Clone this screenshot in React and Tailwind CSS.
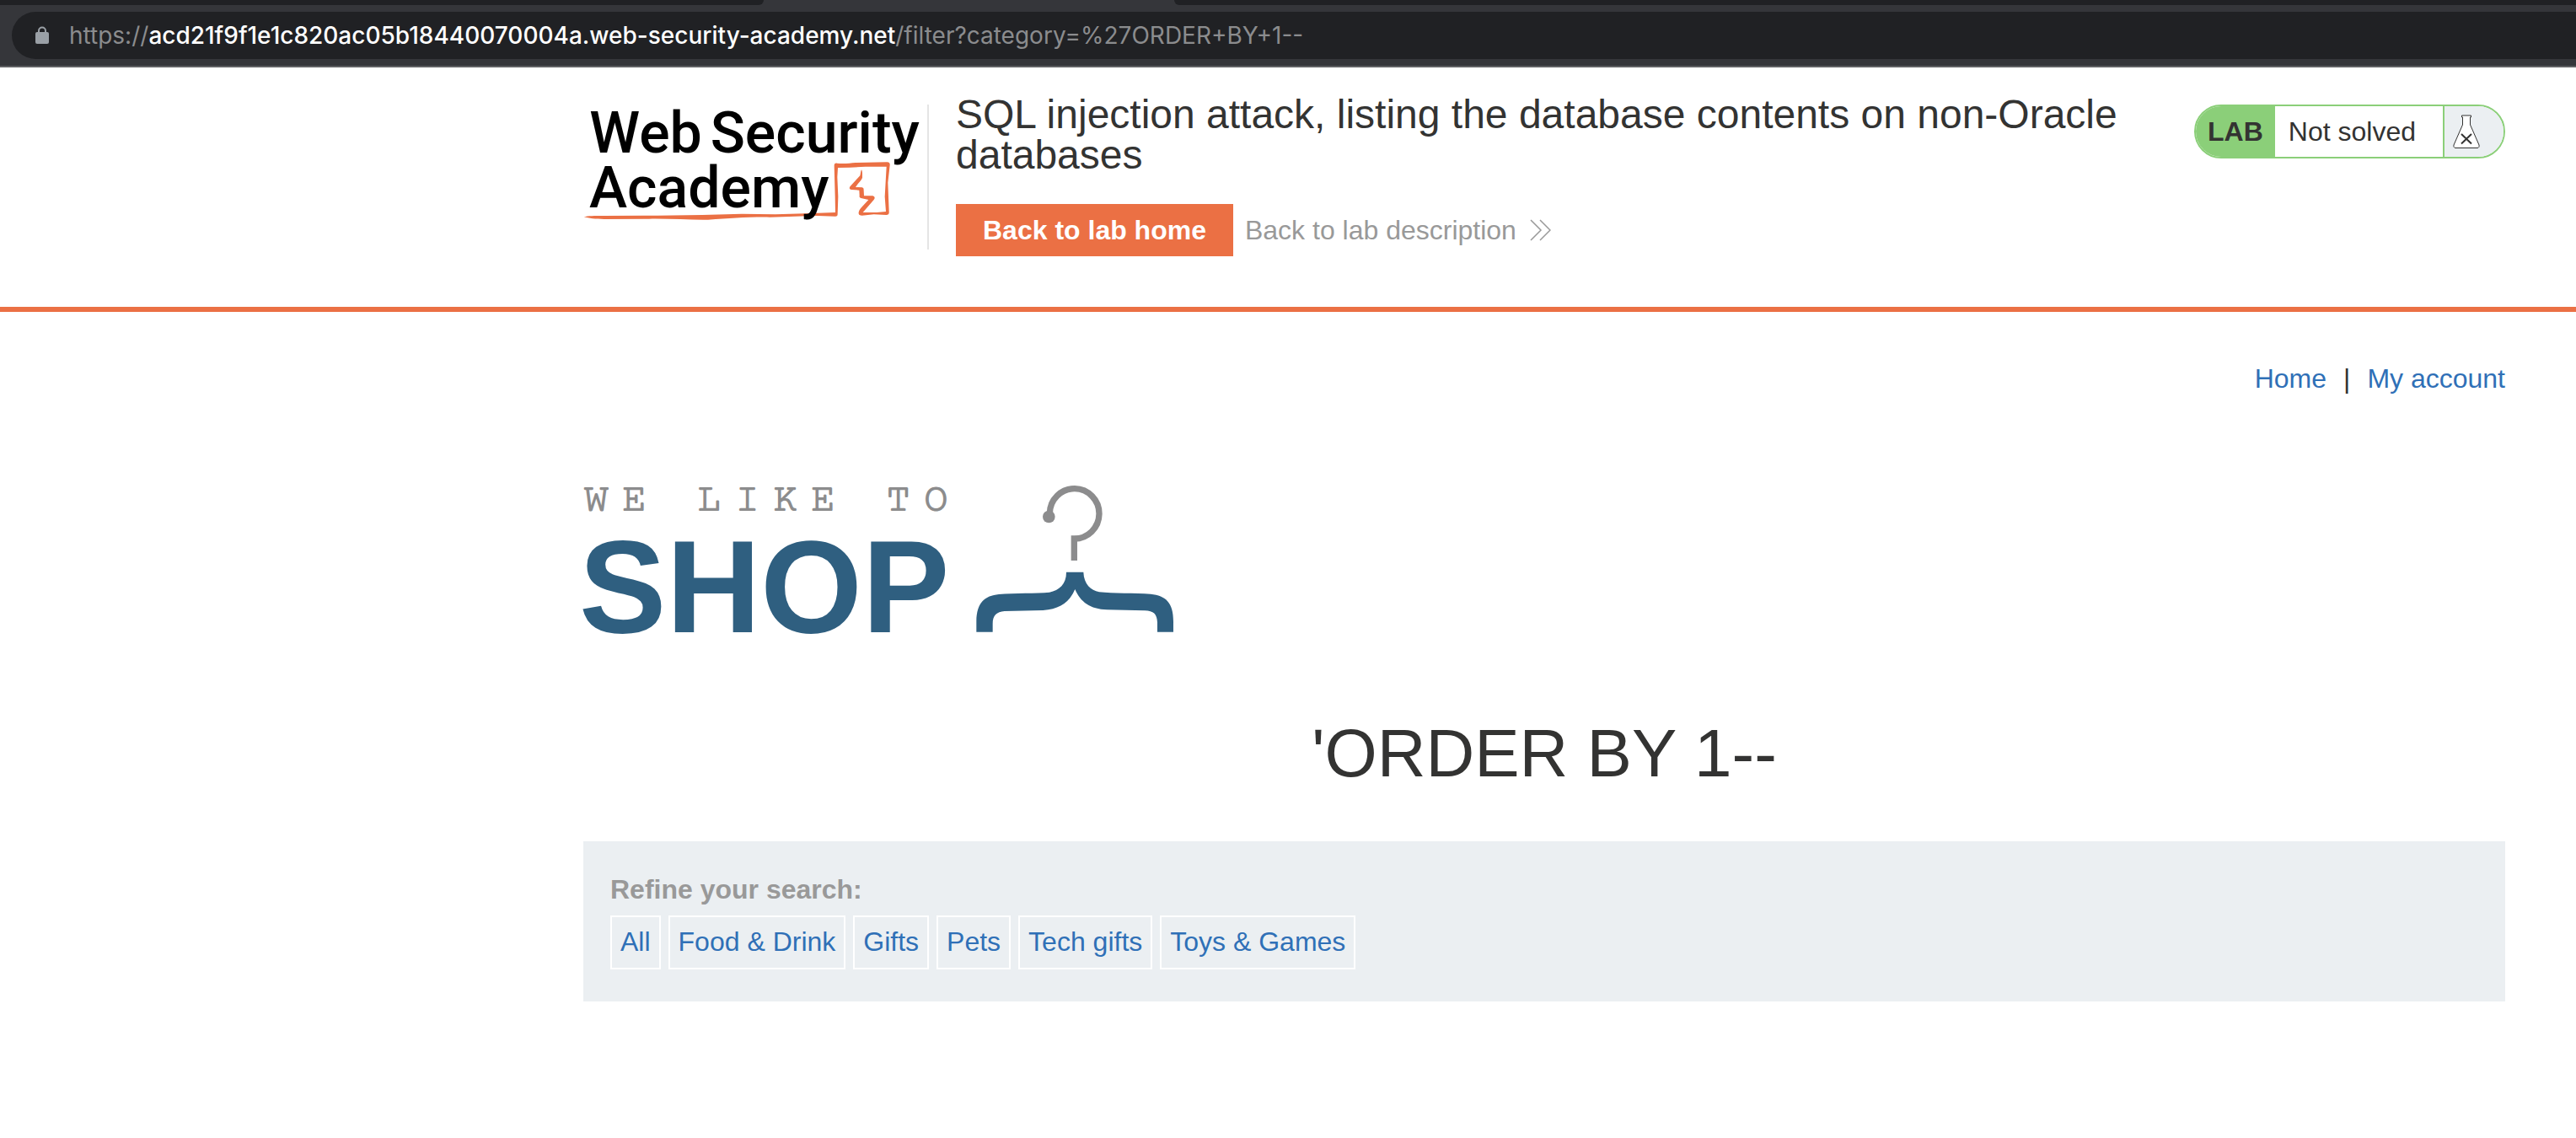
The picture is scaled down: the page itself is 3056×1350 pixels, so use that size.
const categories = ['All', 'Food & Drink', 'Gifts', 'Pets', 'Tech gifts', 'Toys & Games'];

function LockIcon() {
  return (
    <svg viewBox="0 0 16 22" className="h-[22px] w-4 shrink-0" aria-hidden="true">
      <path d="M4 9V5.500A4 4 0 0 1 12 5.500V9" fill="none" stroke="#9aa0a6" strokeWidth="2" />
      <rect x="0" y="7" width="16" height="14" rx="2" fill="#9aa0a6" />
    </svg>
  );
}

function BrowserBar() {
  return (
    <div className="border-b-2 border-[#5f6063] bg-[#35363a] pb-2">
      <div className="flex h-1.5">
        <div className="w-[906px] rounded-br-xl bg-[#202124]" />
        <div className="w-[487px]" />
        <div className="flex-1 rounded-bl-xl bg-[#202124]" />
      </div>
      <div className="mt-2 ml-3.5 flex h-14 items-center gap-6 rounded-l-full bg-[#202124] pl-7">
        <LockIcon />
        <div
          role="textbox"
          aria-label="Address"
          contentEditable
          suppressContentEditableWarning
          className="flex-1 font-[Inter,sans-serif] text-[28px] leading-9 whitespace-nowrap text-[#8b8c8e] outline-none"
        >
          https://
          <span className="font-medium text-white">acd21f9f1e1c820ac05b18440070004a.web-security-academy.net</span>
          /filter?category=%27ORDER+BY+1--
        </div>
      </div>
    </div>
  );
}

function AcademyLogo() {
  return (
    <svg
      viewBox="36 60 1200 450"
      className="mt-10 h-[150px] w-[400px] shrink-0 overflow-visible"
      role="img"
      aria-label="Web Security Academy"
    >
      <path
        fill="#eb7044"
        d="M38 472C52 468 75 468 110 468L300 467L460 465L600 461L720 463L850 459L933 456L932 400L929 290C929 283 932 280 939 281C960 284 985 281 1005 279L1115 277C1124 276 1128 280 1127 288L1120 350L1124 452C1125 461 1122 465 1114 465L1070 463L1028 467C1018 467 1015 463 1016 456C1017 449 1020 445 1024 440L1051 411L1024 405C1019 404 1018 401 1019 395L1018 377L990 375C982 373 982 368 986 363L1021 325C1023 318 1023 309 1026 304C1030 309 1029 325 1029 333C1024 345 1012 354 1005 366L1028 367C1033 368 1034 371 1034 377L1035 397L1066 397C1074 400 1075 405 1070 411L1031 456L1080 456L1113 453L1109 400L1115 293L1040 293L985 296L942 297L940 330L943 400L941 462C941 468 939 470 933 470L870 468C820 468 760 472 700 473C620 472 560 477 480 482C420 483 350 478 270 479L110 480C80 480 55 477 38 472Z"
      />
      <g className="font-[Roboto,sans-serif] font-medium" fontSize="204" fill="#000">
        <text x="58" y="243">Web</text>
        <text x="488" y="243">Security</text>
        <text x="57" y="437">Academy</text>
      </g>
    </svg>
  );
}

function FlaskIcon() {
  return (
    <svg viewBox="0 0 32 40" className="h-10 w-8" aria-hidden="true">
      <path
        d="M10.500 1H21.500V3H20.500V12L31 36C31.500 38 30.500 39.500 29 39.500H3C1.500 39.500 0.500 38 1 36L11.500 12V3H10.500Z"
        fill="#fff"
        stroke="#333332"
        strokeWidth="1"
      />
      <path d="M10 23L22 34.500M22 23L10 34.500" fill="none" stroke="#333332" strokeWidth="2" />
    </svg>
  );
}

function LabStatus() {
  return (
    <div className="mt-11 ml-auto flex h-16 shrink-0 overflow-hidden rounded-full border-2 border-[#8bcf79] bg-white text-[32px]">
      <p className="flex items-center bg-[#8bcf79] px-3.5 font-bold">LAB</p>
      <p className="flex items-center pr-8 pl-4">Not solved</p>
      <span className="flex items-center border-l-2 border-[#8bcf79] bg-[#ebeff2] pr-7 pl-2.5">
        <FlaskIcon />
      </span>
    </div>
  );
}

function LabHeader() {
  return (
    <header className="border-b-[6px] border-[#eb7044] pb-[60px]">
      <div className="mr-[84px] ml-auto flex max-w-[2280px] items-start">
        <AcademyLogo />
        <div className="mt-11 ml-2 h-[172px] w-0.5 shrink-0 bg-[#e5e5e5]" />
        <div className="mt-8 ml-8">
          <h2 className="text-[48px] leading-[48px]">
            SQL injection attack, listing the database contents on non-Oracle databases
          </h2>
          <div className="mt-[34px] flex items-center gap-3.5">
            <a href="#home" className="bg-[#eb7044] px-8 text-[32px] leading-[62px] font-bold text-white">
              Back to lab home
            </a>
            <a href="#description" className="flex items-center gap-4 text-[32px] leading-[62px] text-[#999999]">
              Back to lab description
              <svg viewBox="0 0 25 26" className="h-[26px] w-[25px]" aria-hidden="true">
                <path d="M1 1L13 13L1 25M12 1L24 13L12 25" fill="none" stroke="#999999" strokeWidth="1.500" />
              </svg>
            </a>
          </div>
        </div>
        <LabStatus />
      </div>
    </header>
  );
}

function ShopLogo() {
  return (
    <svg
      viewBox="0 0 720 200"
      className="mt-[87px] h-[200px] w-[720px] overflow-visible"
      role="img"
      aria-label="We like to shop"
    >
      <text
        x="1"
        y="46"
        fontSize="48"
        fill="#8c8c8d"
        className="font-['Courier_Prime','Courier_10_Pitch',Courier,'Liberation_Mono',monospace] tracking-[16px]"
      >
        WE LIKE TO
      </text>
      <text x="-5" y="190" fontSize="155" fill="#2f5f80" className="font-['Liberation_Sans',Arial,sans-serif] font-bold">
        SHOP
      </text>
      <g transform="translate(448 0) scale(0.3333)">
        <path d="M316 150V147A88 89 0 1 1 403 237V315" fill="none" stroke="#8c8c8d" strokeWidth="22" />
        <circle cx="313" cy="159" r="22" fill="#8c8c8d" />
        <path
          fill="#2f5f80"
          d="M375 356H436C438 400 462 420 492 427C540 433 620 430 675 434C730 440 756 465 756 530V569H699V535C698 505 685 494 655 493L520 490C460 488 425 462 406 417C387 462 352 488 292 492L155 495C127 497 113 510 113 540V569H55V530C56 465 85 440 135 435C190 430 270 432 315 428C350 420 375 400 375 356Z"
        />
      </g>
    </svg>
  );
}

export default function App() {
  return (
    <div className="bg-white font-['Liberation_Sans',Arial,sans-serif] text-[#333332]">
      <BrowserBar />
      <LabHeader />
      <main className="mr-[84px] ml-auto max-w-[2280px]">
        <nav className="mt-[55px] flex justify-end gap-5 text-[32px] leading-[48px]">
          <a href="#home" className="text-[#2f70b7]">Home</a>
          <span>|</span>
          <a href="#account" className="text-[#2f70b7]">My account</a>
        </nav>
        <ShopLogo />
        <h1 className="mt-[86px] text-center text-[80px] leading-[96px]">'ORDER BY 1--</h1>
        <section className="mt-14 bg-[#ebeff2] px-8 pt-[37px] pb-[38px] text-[32px]">
          <p className="leading-10 font-bold text-[#999999]">Refine your search:</p>
          <div className="mt-[11px] flex gap-[9px]">
            {categories.map((name) => (
              <a
                key={name}
                href={`#${name}`}
                className="border-2 border-white px-2.5 pb-0.5 leading-[58px] text-[#2f70b7]"
              >
                {name}
              </a>
            ))}
          </div>
        </section>
      </main>
    </div>
  );
}
